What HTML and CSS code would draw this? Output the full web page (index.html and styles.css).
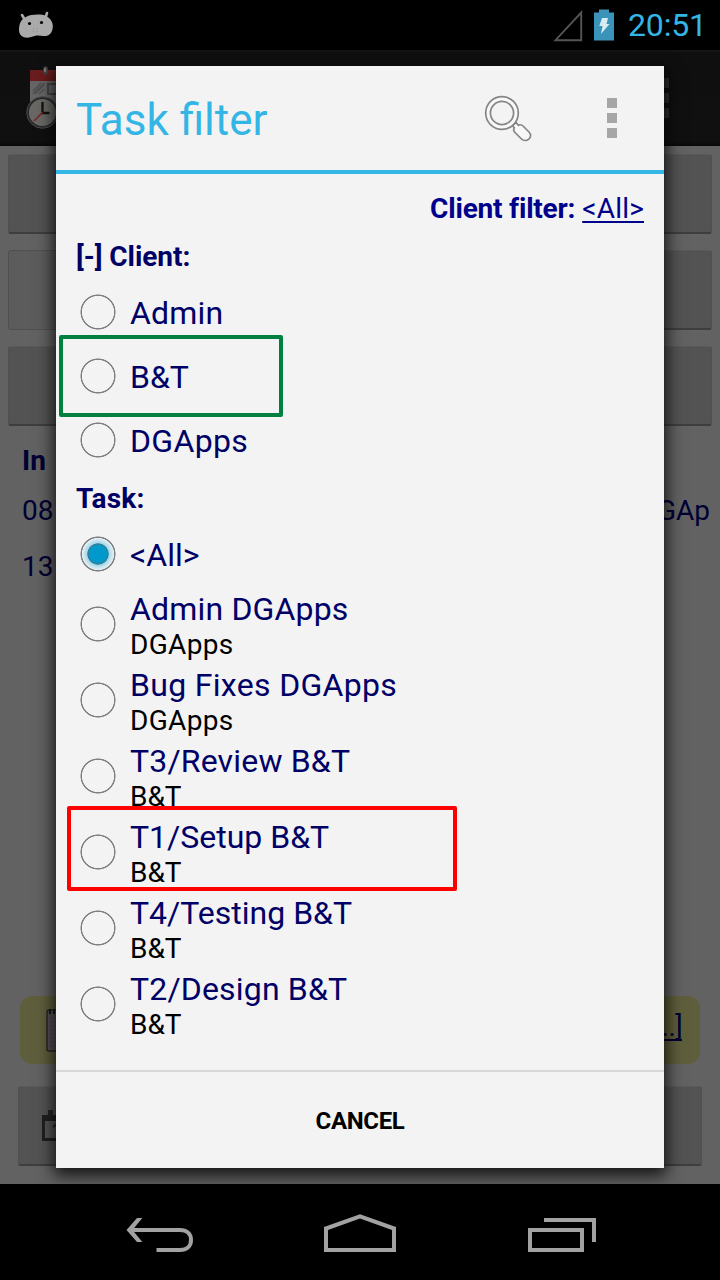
FILE: index.html
```html
<!DOCTYPE html>
<html lang="en">
<head>
<meta charset="utf-8">
<title>Task filter</title>
<link rel="stylesheet" href="styles.css">
</head>
<body>
<div class="screen">
  <header class="status">
    <svg class="droid" width="38" height="30" viewBox="0 0 38 30">
      <path d="M4 5 7 10M29 3 27 9" stroke="#aaa" stroke-width="2.6" stroke-linecap="round"/>
      <path d="M8 7C13 4 24 4 28 6C33 8 36 14 34.500 19C33.500 25 29 26.500 25 26C20 25 17 25.500 13 27C7 29 1 26.500 1 20C1 14 3 9 8 7Z" fill="#aaa"/>
      <circle cx="11.5" cy="13.5" r="1.6"/><circle cx="23.5" cy="12.5" r="1.6"/>
      <path d="M15.500 18v5M19 18v4" stroke="#888" stroke-width=".7" stroke-dasharray="1 2"/>
    </svg>
    <span class="spacer"></span>
    <svg class="signal" width="30" height="34" viewBox="0 0 30 34"><path d="M2.500 32.200H28.200V4.500Z" fill="none" stroke="#555" stroke-width="1.9"/></svg>
    <svg class="battery" width="20" height="32" viewBox="0 0 20 32"><path d="M0 3.500H5V.5H15V3.500H20V31.500H0Z" fill="#3a93b9"/><path d="M8 9h6l-1.500 6h3L7 25l1.500-8H5.300Z" fill="#d9ebf3"/></svg>
    <span class="clock">20:51</span>
  </header>
  <div class="actionbar">
    <svg class="appicon" width="60" height="66" viewBox="0 0 60 66">
      <path d="M4 5h50v40H4z" fill="#666"/><path d="M4 4h50v11H4z" fill="#6b1c1e"/>
      <path d="M7 25l8-8M7 28 18 17M9 28l9-9M13 28l5-5" stroke="#505050" stroke-width="1.500"/>
      <path d="M22 18h12v10H22z" fill="#666" stroke="#444" stroke-width="2"/>
      <path d="M19.500 2.500v4" stroke="#444" stroke-width="4.500" stroke-linecap="round"/><path d="M19 2v4" stroke="#888" stroke-width="1.500"/>
      <circle cx="16.500" cy="46.500" r="14.700" fill="#696864" stroke="#292929" stroke-width="2.200"/><circle cx="16.500" cy="46.500" r="15.800" fill="none" stroke="#4b4b4b" stroke-width="1"/>
      <path d="M16.500 36v11h7" fill="none" stroke="#111" stroke-width="2.300"/><path d="M17 46 8 55" stroke="#762323" stroke-width="1.500"/>
    </svg>
    <span class="spacer"></span>
    <span class="dots dim"><i></i><i></i><i></i></span>
  </div>
  <main class="page">
    <div class="btn"></div>
    <div class="pair"><div class="btn light"></div><div class="btn"></div></div>
    <div class="btn"></div>
    <div class="log head"><b>In</b></div>
    <div class="log"><span>08</span><span class="client">DGAp</span></div>
    <div class="log"><span>13</span></div>
    <div class="spacer"></div>
    <div class="note">
      <svg width="30" height="44" viewBox="0 0 30 44"><rect x="1" y="2" width="29" height="41" rx="2" fill="#555" stroke="#262626" stroke-width="1.500"/><path d="M2 10h28M2 14h28M2 18h28M2 22h28M2 26h28M2 30h28M2 34h28M2 38h28" stroke="#444a62"/><path d="M5 3v38" stroke="#713b43"/><path d="M4 1v5M8 1v5" stroke="#151515" stroke-width="2"/></svg>
      <span class="more">[...]</span>
    </div>
    <div class="btn bottom">
      <svg width="36" height="34" viewBox="0 0 36 34"><path d="M1 6h35v26H1z" fill="#202020"/><path d="M4 12h30v17H4z" fill="#555"/><path d="M9.500 1v7" stroke="#252525" stroke-width="5"/><path d="M12 18l4-3v13" stroke="#222" stroke-width="2" fill="none"/></svg>
    </div>
  </main>
  <nav class="nav">
    <svg width="720" height="96" viewBox="0 0 720 96" fill="none" stroke="#a2a2a2" stroke-width="4">
      <path d="M129.500 46H180C186.500 46 191 49.500 191 56S186.500 66 180 66H156.500"/>
      <path d="M137 34h5.300L132.500 46l9.800 12H137L126.500 46Z" fill="#a2a2a2" stroke="none"/>
      <path d="M326 66V44.500L360 32.300 394 44.500V66Z"/>
      <path d="M530 46h52v20h-52ZM544 36h50v22"/>
    </svg>
  </nav>

  <section class="dialog">
    <div class="title">
      <h1>Task filter</h1>
      <svg class="search" width="50" height="50" viewBox="0 0 50 50" fill="#f8f8f8" stroke="#858585" stroke-width="1.700">
        <path d="M28.500 32.500 32 29.500 34.500 32.300C36 31.300 38 32 39.500 33.500L45 39C50 44 42 50.500 37.500 46L31.500 40C29.500 38 29 36.500 30.300 35Z"/>
        <circle cx="18" cy="20" r="16.300"/><circle cx="18" cy="20" r="11.600" fill="#f3f3f3"/>
      </svg>
      <span class="dots"><i></i><i></i><i></i></span>
    </div>
    <div class="content">
      <div class="filter"><b>Client filter:</b> <u>&lt;All&gt;</u></div>
      <h2 class="clients">[-] Client:</h2>
      <label class="row"><i class="radio"></i><span class="t2">Admin</span></label>
      <label class="row"><i class="radio"></i><span>B&amp;T</span></label>
      <label class="row"><i class="radio"></i><span class="t3">DGApps</span></label>
      <h2 class="tasks">Task:</h2>
      <label class="row"><i class="radio on"></i><span>&lt;All&gt;</span></label>
      <label class="row task"><i class="radio"></i><span class="t2">Admin DGApps<small class="t3">DGApps</small></span></label>
      <label class="row task"><i class="radio"></i><span class="t3">Bug Fixes DGApps<small>DGApps</small></span></label>
      <label class="row task"><i class="radio"></i><span class="t2">T3/Review B&amp;T<small class="t0">B&amp;T</small></span></label>
      <label class="row task"><i class="radio"></i><span>T1/Setup B&amp;T<small>B&amp;T</small></span></label>
      <label class="row task"><i class="radio"></i><span>T4/Testing B&amp;T<small>B&amp;T</small></span></label>
      <label class="row task"><i class="radio"></i><span class="t2">T2/Design B&amp;T<small class="t0">B&amp;T</small></span></label>
    </div>
    <div class="cancel">CANCEL</div>
    <div class="mark green"></div>
    <div class="mark red"></div>
  </section>
</div>
</body>
</html>
```
FILE: styles.css
```css
* { box-sizing: border-box; }
body { margin: 0; background: #000; }
.screen { position: relative; width: 720px; height: 1280px; display: flex; flex-direction: column; overflow: hidden; font-family: Roboto, sans-serif; color: #000066; }
.spacer { flex: 1; }
.status { height: 50px; display: flex; align-items: flex-start; background: #000; padding: 0 14px 0 18px; }
.droid { margin-top: 10px; }
.signal { margin: 8px 11px 0 0; }
.battery { margin: 9px 14px 0 0; }
.clock { width: 78px; font-size: 32px; line-height: 51px; letter-spacing: -.15px; color: #33b5e5; white-space: nowrap; }
.actionbar { height: 96px; display: flex; background: linear-gradient(#171717, #0f0f0f 3px, #101010 92px, #080808); padding: 0 51px 0 26px; }
.appicon { margin-top: 16px; }
.dots { display: flex; flex-direction: column; gap: 5px; }
.dots i { width: 10px; height: 10px; background: #a6a6a6; }
.dots.dim { margin-top: 28px; }
.dots.dim i { background: #303030; }
.page { flex: 1; display: flex; flex-direction: column; background: #626262; padding: 8px 8px 18px; }
.btn { height: 80px; flex: none; background: #535353; border-radius: 3px; margin-bottom: 16px; border: 1px solid #505050; border-top-color: #595959; border-bottom: 2px solid #3e3e3e; }
.pair { display: flex; }
.pair .btn { flex: 1; }
.pair .btn.light { background: #5c5c5c; border: 1px solid #505050; }
.log { display: flex; justify-content: space-between; height: 56px; font-size: 28px; line-height: 58px; color: #000033; padding: 0 2px 0 14px; }
.log.head { height: 40px; line-height: 38px; }
.note { height: 68px; margin: 0 12px 22px; border-radius: 12px; background: #5f5e3c; display: flex; justify-content: space-between; padding: 12px 18px 0 26px; }
.more { font-size: 28px; line-height: 38px; letter-spacing: -.6px; color: #000033; text-decoration: underline; text-underline-offset: 3px; text-decoration-thickness: 2px; text-decoration-skip-ink: none; }
.btn.bottom { margin: 0 10px; padding: 22px 0 0 22px; }
.nav { height: 96px; background: #000; }
.nav svg { display: block; }

.dialog { position: absolute; left: 56px; top: 66px; width: 608px; height: 1102px; display: flex; flex-direction: column; background: #f3f3f3; box-shadow: 0 5px 16px 2px rgba(0,0,0,.85); }
.title { height: 108px; display: flex; border-bottom: 4px solid #33b5e5; padding: 0 47px 0 20px; }
h1 { margin: 0; flex: 1; font-size: 44px; font-weight: 400; line-height: 109px; color: #33b5e5; }
.search { margin: 27px 73px 0 0; }
.title .dots { margin-top: 32px; }
.content { flex: 1; padding: 0 20px; }
.filter { height: 58px; padding-top: 17px; text-align: right; font-size: 28px; line-height: 36px; color: #00008b; }
.filter b { letter-spacing: -.2px; }
.filter u { letter-spacing: .2px; }
u { text-underline-offset: 3px; text-decoration-thickness: 2px; text-decoration-skip-ink: none; }
h2 { margin: 0; font-size: 28px; line-height: 50px; }
.clients { height: 48px; letter-spacing: -.05px; }
.tasks { height: 50px; line-height: 54px; letter-spacing: .2px; }
.row { height: 64px; display: flex; align-items: center; font-size: 32px; line-height: 38px; }
.row > span { padding-top: 1px; }
.t0 { letter-spacing: 0; }
.t2 { letter-spacing: .17px; }
.t3 { letter-spacing: .32px; }
.radio { flex: none; width: 36px; height: 36px; margin: 0 14px 0 4px; border-radius: 50%; background: radial-gradient(circle closest-side, transparent 15.800px, #808080 16.400px, #808080 17.200px, transparent 17.900px); }
.radio.on { background: radial-gradient(circle closest-side, #0099cc 8.800px, #347f99 9.500px 10.300px, #a5d7ea 11px, #e5f0f4 15.800px, #808080 16.400px, #808080 17.200px, transparent 17.900px); }
.row.task { height: 76px; }
.row.task > span { padding-top: 3px; }
small { display: block; font-size: 28px; line-height: 33px; color: #000; }
.cancel { height: 98px; border-top: 2px solid #d8d8d8; text-align: center; font-size: 24px; font-weight: 700; line-height: 99px; letter-spacing: -.35px; color: #000; }
.mark { position: absolute; border-radius: 2px; }
.green { left: 3px; top: 269px; width: 224px; height: 82px; border: 4px solid #008040; }
.red { left: 11px; top: 740px; width: 390px; height: 85px; border: 4px solid #f00; }
```
